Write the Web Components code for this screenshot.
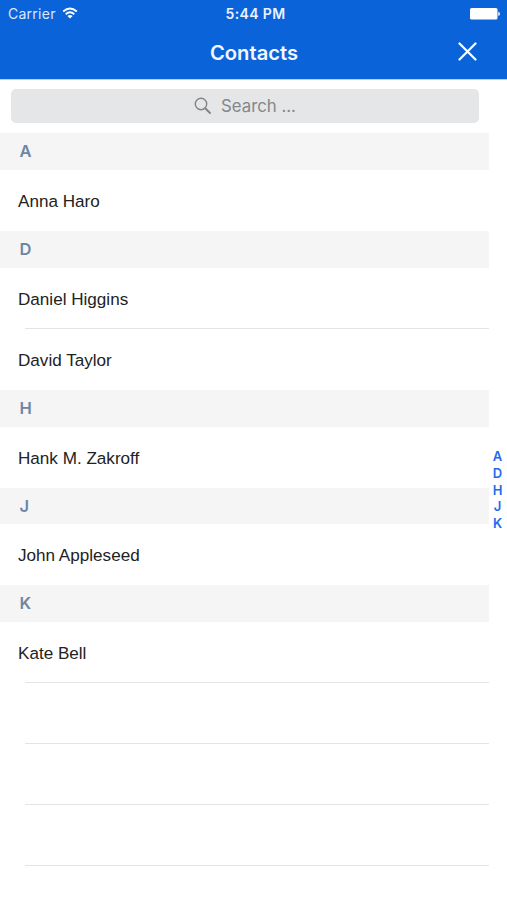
<!DOCTYPE html>
<html lang="en">
<head>
<meta charset="utf-8">
<title>Contacts</title>
<style>
html,body{margin:0;height:100%;background:#fff;overflow:hidden}
body{font-family:Inter,"Liberation Sans",sans-serif}
</style>
</head>
<body>
<contacts-app></contacts-app>
<script>
const define = (name, html) => customElements.define(name, class extends HTMLElement {
  constructor() {
    super();
    this.attachShadow({mode: 'open'}).innerHTML = html;
  }
});

define('status-bar', `
<style>
:host{display:grid;grid-template-columns:1fr auto 1fr;align-items:center;height:27px;padding:0 7px 0 8px;box-sizing:border-box;color:#fff;font-size:14px;line-height:27px}
.left{display:flex;align-items:center;gap:6px;color:#dbeaff;letter-spacing:.26px}
.left svg{margin-top:-2px}
.time{font-weight:600;letter-spacing:.36px;color:#e9f2ff;margin-left:3px}
.batt{justify-self:end}
svg{display:block}
</style>
<div class="left"><span>Carrier</span>
<svg width="16" height="12" viewBox="0 0 16 12" fill="none" stroke="#fff" stroke-width="1.9"><path d="M1.2 4.5Q8-1.6 14.8 4.5M3.7 7.2Q8 3.4 12.3 7.2"/><path d="M8 11.6L5.4 9Q8 6.9 10.6 9Z" fill="#fff" stroke="none"/></svg></div>
<span class="time">5:44 PM</span>
<svg class="batt" width="30" height="12" viewBox="0 0 30 12" fill="#fff"><rect x="0" y="0" width="27.5" height="11.6" rx="1.6"/><path d="M28.3 3.8Q30 4.3 30 5.9T28.3 8Z"/></svg>`);

define('nav-bar', `
<style>
:host{display:grid;grid-template-columns:1fr auto 1fr;align-items:center;height:52px;padding:0 30px 0 31px;box-sizing:border-box;color:#fff}
h1{grid-column:2;margin:0;font-size:20.2px;font-weight:600;line-height:51px;height:52px;color:#f2f7ff}
svg{justify-self:end;margin-top:-3px}
</style>
<h1><slot></slot></h1>
<svg width="19" height="19" viewBox="0 0 19 19" stroke="#fff" stroke-width="2.2" stroke-linecap="round"><path d="M1.5 1.5L17.5 17.5M17.5 1.5L1.5 17.5"/></svg>`);

define('search-field', `
<style>
:host{display:flex;align-items:center;justify-content:center;gap:9px;height:34px;margin:10px 28px 10px 11px;border-radius:5px;background:#e4e6e8;color:#85878a;font-size:16.8px;line-height:34px}
</style>
<svg width="18" height="18" viewBox="0 0 18 18" fill="none" stroke="#828487"><circle cx="7" cy="7" r="5.7" stroke-width="1.4"/><path d="M11.2 11.2L16 16" stroke-width="2" stroke-linecap="round"/></svg>
<span><slot></slot></span>`);

define('section-header', `
<style>
:host{display:block;height:36.75px;padding-left:19.5px;margin-right:18px;background:#f5f5f5;color:#6c87a5;font-size:16.5px;font-weight:600;line-height:37px}
</style><slot></slot>`);

define('contact-row', `
<style>
:host{display:block;height:61px;box-sizing:border-box;padding-left:18px;margin-right:18px;color:#222;font:17.1px/63px "Liberation Sans",Arial,sans-serif;background:linear-gradient(#e4e4e4,#e4e4e4) 25px 100%/100% var(--line,0px) no-repeat}
:host([divided]){--line:1px}
</style><slot></slot>`);

define('index-bar', `
<style>
:host{position:absolute;right:0;top:448px;width:19px;display:grid;grid-auto-rows:16.8px;justify-items:center;color:#1f68ef;font-size:13px;font-weight:600;line-height:17px}
</style><slot></slot>`);

define('contacts-app', `
<style>
:host{display:block;position:relative;height:900px;overflow:hidden;background:#fff}
header{background:#0b63d9;height:79px;border-bottom:1px solid #b5d1f4;box-sizing:content-box;margin-bottom:-1px}
main{padding-top:.4px}
</style>
<header><status-bar></status-bar><nav-bar>Contacts</nav-bar></header>
<search-field>Search ...</search-field>
<main>
<section-header>A</section-header><contact-row>Anna Haro</contact-row>
<section-header>D</section-header><contact-row divided>Daniel Higgins</contact-row><contact-row>David Taylor</contact-row>
<section-header>H</section-header><contact-row>Hank M. Zakroff</contact-row>
<section-header>J</section-header><contact-row>John Appleseed</contact-row>
<section-header>K</section-header><contact-row divided>Kate Bell</contact-row>
<contact-row divided></contact-row><contact-row divided></contact-row><contact-row divided></contact-row>
</main>
<index-bar><span>A</span><span>D</span><span>H</span><span>J</span><span>K</span></index-bar>`);
</script>
</body>
</html>
